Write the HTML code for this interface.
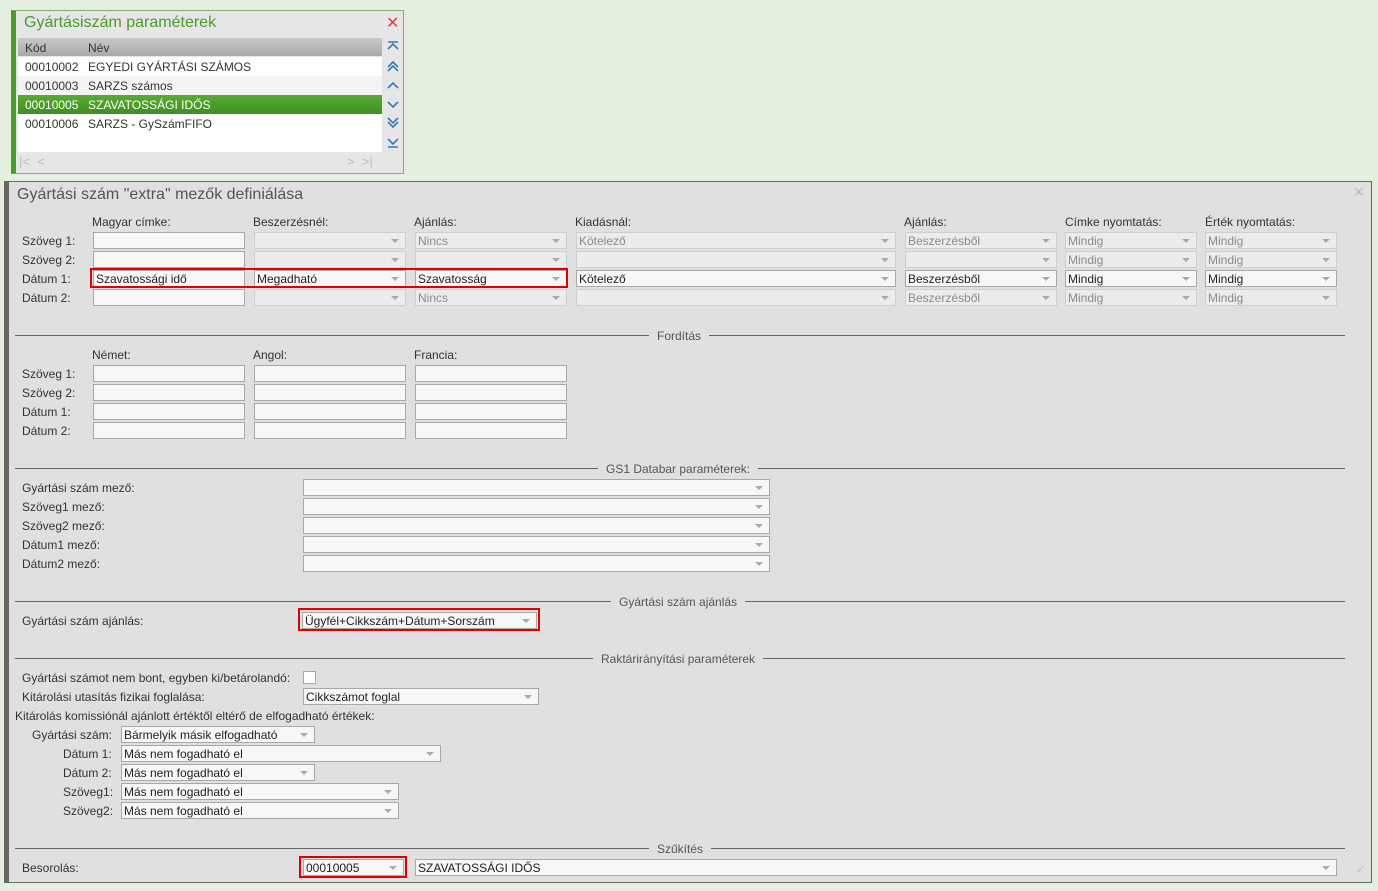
<!DOCTYPE html>
<html><head><meta charset="utf-8"><style>
*{box-sizing:border-box}
body{margin:0;width:1378px;height:891px;background:#e4efdf;font-family:"Liberation Sans",sans-serif;font-size:12px;color:#333;position:relative;overflow:hidden}
.a{position:absolute;white-space:nowrap}
.f{position:absolute;height:17px;border:1px solid #a8a8a8;background:#f7f7f7;line-height:16px;padding-left:2px;color:#222;white-space:nowrap;overflow:hidden}
.d{background:#ececec;border-color:#cfcfcf;color:#8a8a8a}
.s::after{content:"";position:absolute;right:6px;top:6px;border-left:4px solid transparent;border-right:4px solid transparent;border-top:4px solid #aaa}
.red{position:absolute;border:2px solid #e00000}
.lg{position:absolute;left:15px;width:1330px;height:1px;background:#666}
.lg span{position:absolute;top:-7px;background:#e0e0e0;padding:0 8px;color:#555;line-height:16px}
.row{position:absolute;left:18px;width:364px;height:19px;line-height:20px;padding-left:7px}
.row b{font-weight:normal;position:absolute;left:70px}
</style></head><body>
<div class="a" style="left:11px;top:10px;width:393px;height:164px;background:#e6e6e6;border:1px solid #8aae79;border-left:5px solid #4b9b2b"></div>
<div class="a" style="left:24px;top:14px;font-size:16px;color:#4b9b2b">Gyártásiszám paraméterek</div>
<div class="a" style="left:386px;top:13px;font-size:16px;color:#d9463a">✕</div>
<div class="a" style="left:18px;top:38px;width:364px;height:18px;background:linear-gradient(#c9c9c9,#a9a9a9)"></div>
<div class="a" style="left:25px;top:41px;color:#333">Kód</div><div class="a" style="left:88px;top:41px">Név</div>
<div class="row" style="top:57px;background:#fff">00010002<b>EGYEDI GYÁRTÁSI SZÁMOS</b></div>
<div class="row" style="top:76px;background:#f4f4f4">00010003<b>SARZS számos</b></div>
<div class="row" style="top:95px;background:linear-gradient(#5aab35,#3f8f20);color:#fff">00010005<b>SZAVATOSSÁGI IDŐS</b></div>
<div class="row" style="top:114px;background:#fff">00010006<b>SARZS - GySzámFIFO</b></div>
<div class="row" style="top:133px;background:#fff;height:19px"></div>
<div class="a" style="left:19px;top:154px;color:#bbb;font-size:13px">|&lt;&nbsp;&nbsp;&lt;</div>
<div class="a" style="left:347px;top:154px;color:#bbb;font-size:13px">&gt;&nbsp;&nbsp;&gt;|</div>
<svg class="a" style="left:385px;top:38px" width="16" height="114" fill="none" stroke="#3a78b8" stroke-width="1.6">
<path d="M3 4h10M3 11l5-5 5 5"/>
<path d="M3 29l5-5 5 5M3 33l5-5 5 5"/>
<path d="M3 50l5-5 5 5"/>
<path d="M3 64l5 5 5-5"/>
<path d="M3 80l5 5 5-5M3 84l5 5 5-5"/>
<path d="M3 101l5 5 5-5M3 109h10"/>
</svg>

<div class="a" style="left:4px;top:181px;width:1368px;height:702px;background:#e0e0e0;border:1px solid #666;border-left:5px solid #666"></div>
<div class="a" style="left:17px;top:186px;font-size:16px;color:#555">Gyártási szám "extra" mezők definiálása</div>
<div class="a" style="left:1353px;top:184px;font-size:14px;color:#bbb">✕</div>

<div class="a" style="left:92px;top:215px">Magyar címke:</div>
<div class="a" style="left:253px;top:215px">Beszerzésnél:</div>
<div class="a" style="left:414px;top:215px">Ajánlás:</div>
<div class="a" style="left:575px;top:215px">Kiadásnál:</div>
<div class="a" style="left:904px;top:215px">Ajánlás:</div>
<div class="a" style="left:1065px;top:215px">Címke nyomtatás:</div>
<div class="a" style="left:1205px;top:215px">Érték nyomtatás:</div>

<div class="a" style="left:22px;top:234px">Szöveg 1:</div>
<div class="a" style="left:22px;top:253px">Szöveg 2:</div>
<div class="a" style="left:22px;top:272px">Dátum 1:</div>
<div class="a" style="left:22px;top:291px">Dátum 2:</div>

<div class="f" style="left:93px;top:232px;width:152px"></div>
<div class="f d s" style="left:254px;top:232px;width:152px"></div>
<div class="f d s" style="left:415px;top:232px;width:152px">Nincs</div>
<div class="f d s" style="left:576px;top:232px;width:320px">Kötelező</div>
<div class="f d s" style="left:905px;top:232px;width:152px">Beszerzésből</div>
<div class="f d s" style="left:1065px;top:232px;width:132px">Mindig</div>
<div class="f d s" style="left:1205px;top:232px;width:132px">Mindig</div>

<div class="f" style="left:93px;top:251px;width:152px"></div>
<div class="f d s" style="left:254px;top:251px;width:152px"></div>
<div class="f d s" style="left:415px;top:251px;width:152px"></div>
<div class="f d s" style="left:576px;top:251px;width:320px"></div>
<div class="f d s" style="left:905px;top:251px;width:152px"></div>
<div class="f d s" style="left:1065px;top:251px;width:132px">Mindig</div>
<div class="f d s" style="left:1205px;top:251px;width:132px">Mindig</div>

<div class="f" style="left:93px;top:270px;width:152px">Szavatossági idő</div>
<div class="f s" style="left:254px;top:270px;width:152px">Megadható</div>
<div class="f s" style="left:415px;top:270px;width:152px">Szavatosság</div>
<div class="f s" style="left:576px;top:270px;width:320px">Kötelező</div>
<div class="f s" style="left:905px;top:270px;width:152px">Beszerzésből</div>
<div class="f s" style="left:1065px;top:270px;width:132px">Mindig</div>
<div class="f s" style="left:1205px;top:270px;width:132px">Mindig</div>
<div class="red" style="left:90px;top:268px;width:478px;height:20px"></div>

<div class="f" style="left:93px;top:289px;width:152px"></div>
<div class="f d s" style="left:254px;top:289px;width:152px"></div>
<div class="f d s" style="left:415px;top:289px;width:152px">Nincs</div>
<div class="f d s" style="left:576px;top:289px;width:320px"></div>
<div class="f d s" style="left:905px;top:289px;width:152px">Beszerzésből</div>
<div class="f d s" style="left:1065px;top:289px;width:132px">Mindig</div>
<div class="f d s" style="left:1205px;top:289px;width:132px">Mindig</div>

<div class="lg" style="top:335px"><span style="left:634px">Fordítás</span></div>
<div class="a" style="left:92px;top:348px">Német:</div>
<div class="a" style="left:253px;top:348px">Angol:</div>
<div class="a" style="left:414px;top:348px">Francia:</div>
<div class="a" style="left:22px;top:367px">Szöveg 1:</div>
<div class="a" style="left:22px;top:386px">Szöveg 2:</div>
<div class="a" style="left:22px;top:405px">Dátum 1:</div>
<div class="a" style="left:22px;top:424px">Dátum 2:</div>
<div class="f" style="left:93px;top:365px;width:152px"></div><div class="f" style="left:254px;top:365px;width:152px"></div><div class="f" style="left:415px;top:365px;width:152px"></div>
<div class="f" style="left:93px;top:384px;width:152px"></div><div class="f" style="left:254px;top:384px;width:152px"></div><div class="f" style="left:415px;top:384px;width:152px"></div>
<div class="f" style="left:93px;top:403px;width:152px"></div><div class="f" style="left:254px;top:403px;width:152px"></div><div class="f" style="left:415px;top:403px;width:152px"></div>
<div class="f" style="left:93px;top:422px;width:152px"></div><div class="f" style="left:254px;top:422px;width:152px"></div><div class="f" style="left:415px;top:422px;width:152px"></div>

<div class="lg" style="top:468px"><span style="left:583px">GS1 Databar paraméterek:</span></div>
<div class="a" style="left:22px;top:481px">Gyártási szám mező:</div>
<div class="a" style="left:22px;top:500px">Szöveg1 mező:</div>
<div class="a" style="left:22px;top:519px">Szöveg2 mező:</div>
<div class="a" style="left:22px;top:538px">Dátum1 mező:</div>
<div class="a" style="left:22px;top:557px">Dátum2 mező:</div>
<div class="f s" style="left:303px;top:479px;width:467px"></div>
<div class="f s" style="left:303px;top:498px;width:467px"></div>
<div class="f s" style="left:303px;top:517px;width:467px"></div>
<div class="f s" style="left:303px;top:536px;width:467px"></div>
<div class="f s" style="left:303px;top:555px;width:467px"></div>

<div class="lg" style="top:601px"><span style="left:596px">Gyártási szám ajánlás</span></div>
<div class="a" style="left:22px;top:614px">Gyártási szám ajánlás:</div>
<div class="f s" style="left:302px;top:612px;width:235px">Ügyfél+Cikkszám+Dátum+Sorszám</div>
<div class="red" style="left:298px;top:608px;width:242px;height:23px"></div>

<div class="lg" style="top:658px"><span style="left:578px">Raktárirányítási paraméterek</span></div>
<div class="a" style="left:22px;top:671px">Gyártási számot nem bont, egyben ki/betárolandó:</div>
<div class="f" style="left:303px;top:671px;width:13px;height:13px;background:#fff"></div>
<div class="a" style="left:22px;top:690px">Kitárolási utasítás fizikai foglalása:</div>
<div class="f s" style="left:303px;top:688px;width:236px">Cikkszámot foglal</div>
<div class="a" style="left:15px;top:709px">Kitárolás komissiónál ajánlott értéktől eltérő de elfogadható értékek:</div>
<div class="a" style="left:32px;top:728px">Gyártási szám:</div>
<div class="a" style="left:63px;top:747px">Dátum 1:</div>
<div class="a" style="left:63px;top:766px">Dátum 2:</div>
<div class="a" style="left:63px;top:785px">Szöveg1:</div>
<div class="a" style="left:63px;top:804px">Szöveg2:</div>
<div class="f s" style="left:121px;top:726px;width:194px">Bármelyik másik elfogadható</div>
<div class="f s" style="left:121px;top:745px;width:320px">Más nem fogadható el</div>
<div class="f s" style="left:121px;top:764px;width:194px">Más nem fogadható el</div>
<div class="f s" style="left:121px;top:783px;width:278px">Más nem fogadható el</div>
<div class="f s" style="left:121px;top:802px;width:278px">Más nem fogadható el</div>

<div class="lg" style="top:848px"><span style="left:634px">Szűkítés</span></div>
<div class="a" style="left:22px;top:861px">Besorolás:</div>
<div class="f s" style="left:303px;top:859px;width:101px;padding-right:10px">00010005</div>
<div class="red" style="left:299px;top:856px;width:108px;height:22px"></div>
<div class="f s" style="left:415px;top:859px;width:922px">SZAVATOSSÁGI IDŐS</div>
<div class="a" style="left:1355px;top:862px;color:#c8c8c8;font-size:13px">✓</div>
</body></html>
